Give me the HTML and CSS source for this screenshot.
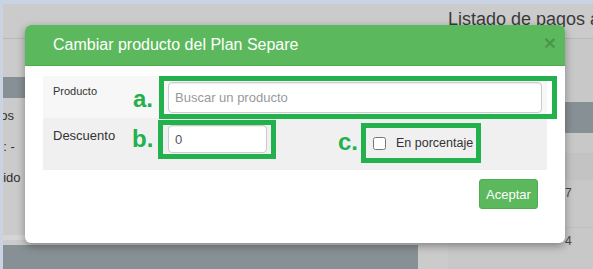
FILE: index.html
```html
<!DOCTYPE html>
<html lang="es">
<head>
  <meta charset="UTF-8" />
  <meta name="viewport" content="width=device-width, initial-scale=1.0"/>
  <title>Cambiar producto del Plan Separe</title>
  <link rel="stylesheet" href="styles.css">
</head>
<body>
  <!-- pagina de fondo (detras del modal) -->
  <div class="page">
    <div class="side">
      <div class="side-top"></div>
      <div class="side-bar"></div>
      <div class="side-info">
        <p>Abonos</p>
        <p>Saldo: -</p>
        <p>Recibido</p>
      </div>
      <div class="side-foot"></div>
    </div>
    <div class="spacer"></div>
    <div class="main">
      <div class="main-head">Listado de pagos a plan separe</div>
      <div class="main-btn">Ver pagos</div>
      <div class="main-table">
        <div class="tr th"><span>Fecha</span><span></span></div>
        <div class="tr"><span></span><span>7</span></div>
        <div class="tr"><span></span><span>4</span></div>
      </div>
    </div>
  </div>

  <!-- modal -->
  <div class="modal">
    <div class="modal-header">
      <span class="modal-title">Cambiar producto del Plan Separe</span>
      <span class="close">&times;</span>
    </div>
    <div class="modal-body">
      <div class="row row-product">
        <label class="lbl-small" for="producto">Producto</label>
        <span class="mark mark-a">a.</span>
        <div class="box box-a">
          <input type="text" id="producto" placeholder="Buscar un producto">
        </div>
      </div>
      <div class="row row-discount">
        <label class="lbl" for="descuento">Descuento</label>
        <span class="mark mark-b">b.</span>
        <div class="box box-b">
          <input type="text" id="descuento" value="0">
        </div>
        <span class="mark mark-c">c.</span>
        <div class="box box-c">
          <input type="checkbox" id="porcentaje">
          <label for="porcentaje">En porcentaje</label>
        </div>
      </div>
    </div>
    <div class="modal-footer">
      <button class="btn-ok">Aceptar</button>
    </div>
  </div>
</body>
</html>
```

FILE: styles.css
```css
body {
  margin: 0;
  width: 593px;
  height: 269px;
  overflow: hidden;
  position: relative;
  font-family: "Liberation Sans", Arial, sans-serif;
  background-color: #c9d3e3;
}
.page {
  margin: 4px 0 0 3px;
  height: 265px;
  background-color: #cbcbcb;
  display: grid;
  grid-template-columns: 415px 30px 1fr;
  overflow: hidden;
}
.side {
  display: flex;
  flex-direction: column;
}
.side-top {
  height: 34px;
  border-bottom: 1px solid #b9b9b9;
}
.side-bar {
  height: 21px;
  margin-top: 38px;
  background-color: #879094;
}
.side-info {
  margin-left: -33px;
  padding-top: 10px;
  font-size: 13px;
  color: #2f2f2f;
}
.side-info p {
  margin: 0 0 16px;
  line-height: 15px;
}
.side-foot {
  margin-top: auto;
  height: 31px;
  border-top: 5px solid #d5d5d5;
  padding-top: 5px;
  background-color: #879094;
  background-clip: content-box;
}
.main {
  display: flex;
  flex-direction: column;
  background-color: #c8c8c8;
}
.main-head {
  height: 30px;
  padding-bottom: 4px;
  line-height: 30px;
  font-size: 18px;
  color: #3a3a3a;
  white-space: nowrap;
  border-bottom: 1px solid #b9b9b9;
  background-color: #cbcbcb;
}
.main-btn {
  margin: 63px 0 0 20px;
  height: 31px;
  line-height: 31px;
  padding-right: 10px;
  text-align: right;
  font-size: 17px;
  font-weight: bold;
  color: #d3d6d8;
  background-color: #879094;
}
.main-table {
  margin-top: 20px;
  font-size: 12px;
  color: #444;
}
.tr {
  display: grid;
  grid-template-columns: 117px 1fr;
  height: 47px;
  line-height: 26px;
  border-bottom: 1px solid #bdbdbd;
}
.tr.th {
  height: 27px;
  background-color: #c3c3c3;
  border-bottom: none;
}

.modal {
  position: absolute;
  left: 25px;
  top: 25px;
  width: 540px;
  height: 218px;
  background-color: #fff;
  border-radius: 6px;
  box-shadow: 0 3px 9px rgba(0, 0, 0, 0.35);
}
.modal-header {
  height: 40px;
  padding: 0 9px 0 28px;
  display: flex;
  align-items: center;
  justify-content: space-between;
  background-color: #5cb85c;
  border-bottom: 1px solid #4cae4c;
  border-radius: 6px 6px 0 0;
}
.modal-title {
  font-size: 16px;
  color: #fff;
}
.close {
  margin-top: -5px;
  font-size: 21px;
  font-weight: bold;
  line-height: 1;
  color: rgba(0, 0, 0, 0.2);
}
.modal-body {
  padding: 10px 18px 0;
}
.row {
  display: flex;
  padding-left: 10px;
}
.row-product {
  height: 42px;
  align-items: center;
  background-color: #f7f7f7;
}
.row-discount {
  height: 52px;
  align-items: flex-start;
  background-color: #f0f0f0;
}
.lbl-small {
  width: 80px;
  align-self: flex-start;
  margin-top: 9px;
  font-size: 11px;
  line-height: 13px;
  color: #333;
}
.lbl {
  width: 79px;
  margin-top: 10px;
  font-size: 13px;
  line-height: 15px;
  color: #333;
}
.mark {
  width: 26px;
  font-size: 24px;
  font-weight: bold;
  line-height: 24px;
  color: #22b14c;
}
.mark-a {
  margin-top: 3px;
}
.mark-b {
  margin-top: 9px;
}
.mark-c {
  width: 23px;
  margin: 12px 0 0 62px;
}
.box {
  border: 5px solid #22b14c;
}
.box-a {
  flex: 1;
  margin-right: -10px;
  padding: 1px 10px 1px 4px;
}
.box-b {
  width: 99px;
  margin-top: 2px;
  padding: 0 4px 1px 5px;
}
.box-c {
  width: 103px;
  height: 30px;
  margin-top: 5px;
  padding-left: 7px;
  display: flex;
  align-items: center;
  white-space: nowrap;
  font-size: 12.5px;
  color: #333;
}
.box input[type="text"] {
  display: block;
  box-sizing: border-box;
  width: 100%;
  padding: 0 6px;
  border: 1px solid #ccc;
  border-radius: 4px;
  box-shadow: inset 0 1px 1px rgba(0, 0, 0, 0.075);
  font-family: "Liberation Sans", Arial, sans-serif;
  font-size: 13px;
  color: #555;
}
.box-a input[type="text"] {
  height: 31px;
}
.box-b input[type="text"] {
  height: 28px;
}
.box input::placeholder {
  color: #999;
}
.box-c input {
  flex: none;
  width: 13px;
  height: 13px;
  margin: 0 10px 0 0;
}
.modal-footer {
  display: flex;
  justify-content: flex-end;
  padding: 9px 27px 0 0;
}
.btn-ok {
  width: 59px;
  height: 30px;
  padding: 0;
  background-color: #5cb85c;
  border: 1px solid #4cae4c;
  border-radius: 3px;
  font-family: "Liberation Sans", Arial, sans-serif;
  font-size: 13px;
  color: #fff;
}
```
